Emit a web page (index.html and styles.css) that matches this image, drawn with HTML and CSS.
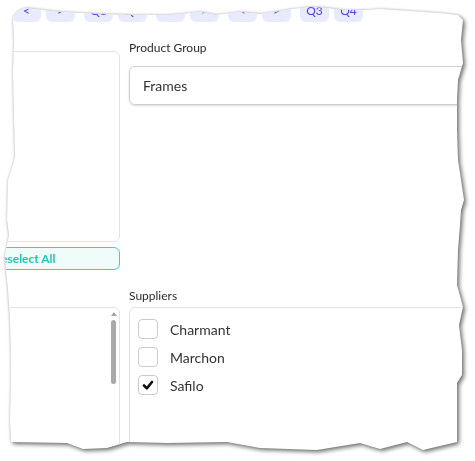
FILE: index.html
```html
<!DOCTYPE html>
<html lang="en">
<head>
    <meta charset="UTF-8">
    <meta name="viewport" content="width=device-width, initial-scale=1.0">
    <title>Filters</title>
    <link rel="stylesheet" href="styles.css">
</head>
<body>
    <div class="paper">
        <div class="sheet">
            <div class="periods">
                <div class="pair"><button class="period">&lt;</button><button class="period">&gt;</button></div>
                <div class="pair"><button class="period">Q1</button><button class="period">Q2</button></div>
                <div class="pair"><button class="period">&lt;</button><button class="period">&gt;</button></div>
                <div class="pair"><button class="period">&lt;</button><button class="period">&gt;</button></div>
                <div class="pair"><button class="period">Q3</button><button class="period">Q4</button></div>
            </div>
            <div class="filters">
                <div class="cell left-top">
                    <div class="list-box"></div>
                    <button class="deselect">Deselect All</button>
                </div>
                <div class="cell">
                    <label class="field-label">Product Group</label>
                    <div class="select">Frames</div>
                </div>
                <div class="cell left-bottom">
                    <div class="list-box scroll-box">
                        <div class="scroll-content"></div>
                        <div class="scrollbar">
                            <span class="scroll-arrow"></span>
                            <span class="scroll-thumb"></span>
                        </div>
                    </div>
                </div>
                <div class="cell">
                    <label class="field-label">Suppliers</label>
                    <div class="list-box suppliers">
                        <div class="check-row"><span class="check"></span>Charmant</div>
                        <div class="check-row"><span class="check"></span>Marchon</div>
                        <div class="check-row"><span class="check checked"><svg width="14" height="14" viewBox="0 0 14 14"><polyline points="3,7.5 5.8,10.3 11,4" fill="none" stroke="#111" stroke-width="2.6" stroke-linecap="round" stroke-linejoin="round"/></svg></span>Safilo</div>
                    </div>
                </div>
            </div>
        </div>
    </div>
</body>
</html>
```

FILE: styles.css
```css
body {
    margin: 0;
    background: #fff;
    font-family: 'Lato', 'Noto Sans', sans-serif;
    color: #333;
}
.paper {
    width: 475px;
    height: 461px;
    filter: drop-shadow(2px 2px 2px rgba(0, 0, 0, 0.5)) drop-shadow(0 0 1px rgba(0, 0, 0, 0.2));
}
.sheet {
    width: 475px;
    height: 461px;
    background: #fff;
    overflow: hidden;
    clip-path: polygon(
        13px 17px, 18px 11px, 25px 8px, 60px 12px, 100px 14px, 130px 15px, 170px 15px, 200px 12px,
        215px 15px, 240px 12px, 260px 14px, 280px 11px, 292px 9px, 310px 7px, 328px 8px, 342px 10px,
        365px 10px, 380px 9px, 410px 11px, 440px 13px, 458px 15px, 463px 20px,
        461px 40px, 463px 63px, 458px 80px, 457px 100px, 457px 130px, 458px 160px, 460px 173px,
        464px 200px, 461px 210px, 460px 225px, 458px 250px, 457px 285px, 463px 307px, 459px 325px,
        462px 350px, 462px 375px, 457px 383px, 457px 400px, 457px 442px,
        423px 450px, 407px 442px, 380px 449px, 360px 443px, 317px 450px, 260px 448px, 227px 442px,
        167px 443px, 127px 442px, 107px 448px, 83px 449px, 67px 443px, 11px 442px,
        10px 420px, 11px 380px, 11px 360px, 10px 320px, 8px 290px, 6px 270px, 5px 255px, 9px 235px,
        7px 220px, 8px 180px, 12px 167px, 15px 157px, 14px 120px, 13px 73px, 14px 40px
    );
}
.periods {
    display: flex;
    gap: 9px;
    margin: -2px 0 0 12px;
}
.pair {
    display: flex;
    gap: 5px;
}
.period {
    width: 29px;
    height: 24px;
    padding: 0;
    border: none;
    border-radius: 6px;
    background: #e8ebfd;
    color: #4f43dd;
    font-family: inherit;
    font-size: 12px;
    line-height: 23px;
}
.filters {
    display: grid;
    grid-template-columns: 160px 400px;
    grid-template-rows: 230px auto;
    column-gap: 9px;
    row-gap: 18px;
    margin: 18px 0 0 -40px;
}
.cell {
    display: flex;
    flex-direction: column;
}
.left-top {
    padding-top: 11px;
    gap: 5px;
}
.left-bottom {
    padding-top: 19px;
}
.list-box {
    border: 1px solid #e3e3e3;
    border-radius: 6px;
    box-sizing: border-box;
}
.left-top .list-box {
    height: 191px;
}
.deselect {
    height: 23px;
    padding: 0 0 0 31px;
    text-align: left;
    border: 1px solid #2fd6c6;
    border-radius: 6px;
    background: #effcfa;
    color: #1dc8b6;
    font-family: inherit;
    font-size: 12px;
    font-weight: 700;
}
.field-label {
    font-size: 12px;
    line-height: 16px;
    color: #2b2b2b;
}
.select {
    margin-top: 10px;
    height: 39px;
    box-sizing: border-box;
    border: 1px solid #cfcfcf;
    border-radius: 6px;
    box-shadow: 0 1px 2px rgba(0, 0, 0, 0.15);
    padding-left: 13px;
    display: flex;
    align-items: center;
    font-size: 14px;
    color: #333;
}
.scroll-box {
    height: 160px;
    display: flex;
}
.scroll-content {
    flex: 1;
}
.scrollbar {
    width: 9px;
    margin-right: 1px;
    display: flex;
    flex-direction: column;
    align-items: center;
    padding-top: 4px;
    gap: 4px;
}
.scroll-arrow {
    width: 0;
    height: 0;
    border-left: 3px solid transparent;
    border-right: 3px solid transparent;
    border-bottom: 4px solid #a3a3a3;
}
.scroll-thumb {
    width: 5px;
    height: 64px;
    border-radius: 3px;
    background: #a9a9a9;
}
.suppliers {
    margin-top: 3px;
    height: 160px;
    padding: 7px 8px;
}
.check-row {
    display: flex;
    align-items: center;
    gap: 12px;
    height: 28px;
    font-size: 14px;
    color: #333;
}
.check {
    width: 20px;
    height: 20px;
    box-sizing: border-box;
    border: 1px solid #cacaca;
    border-radius: 4px;
    display: flex;
    align-items: center;
    justify-content: center;
}
```
